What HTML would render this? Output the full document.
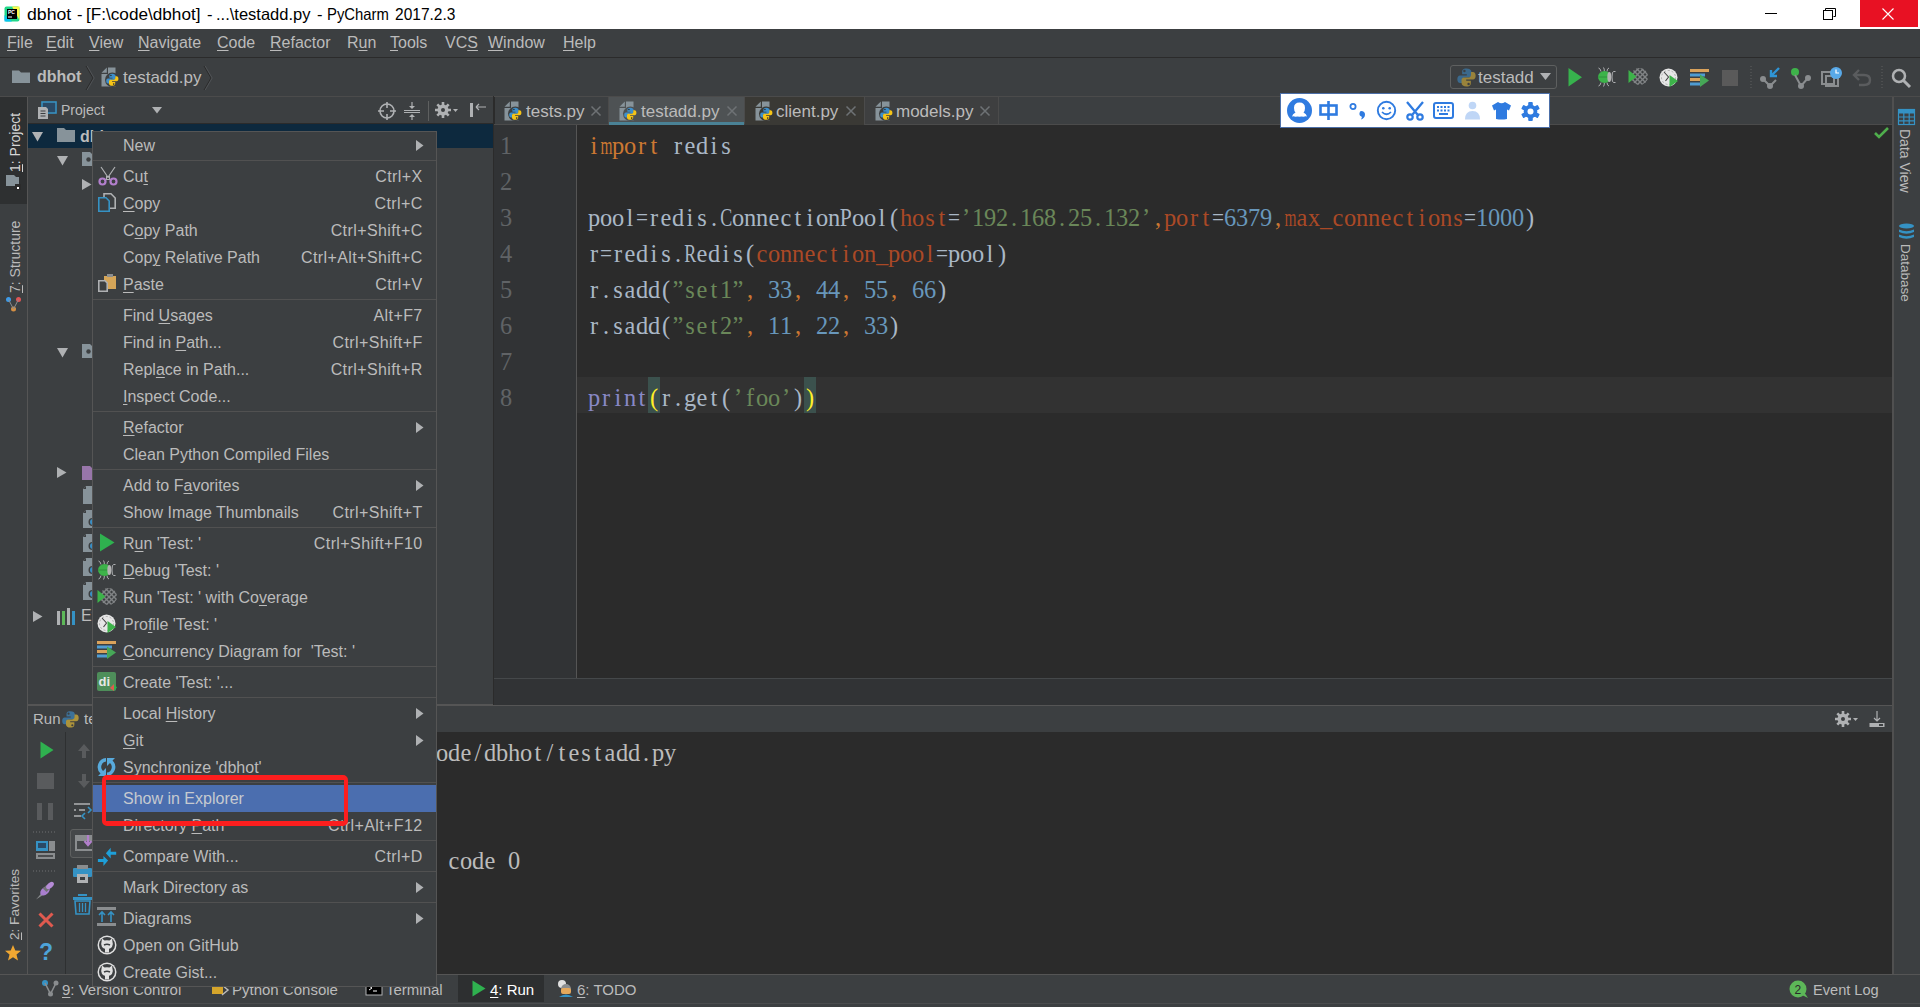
<!DOCTYPE html>
<html><head><meta charset="utf-8">
<style>
*{box-sizing:border-box;margin:0;padding:0}
html,body{width:1920px;height:1007px;overflow:hidden;background:#3C3F41;font-family:"Liberation Sans",sans-serif;color:#BBBBBB}
.a{position:absolute;overflow:visible}
.t{position:absolute;white-space:pre;line-height:1}
.u{text-decoration:underline;text-underline-offset:2px;text-decoration-thickness:1px}
.cl{position:absolute;left:588px;white-space:pre;font-family:"Liberation Serif",serif;font-size:24.4px;line-height:30px;height:30px;color:#A9B7C6}
.cl i{display:inline-block;width:12px;text-align:center;font-style:normal;white-space:pre}
.cl b{display:inline-block;font-weight:normal;transform-origin:50% 50%}
</style></head><body>

<div class="a" style="left:0px;top:0px;width:1920px;height:29px;background:#FFFFFF;"></div>
<svg class="a" style="left:4px;top:6px" width="16" height="16" viewBox="0 0 16 16"><rect x="0.5" y="0.5" width="15" height="15" rx="2" fill="#21D789"/><path d="M8 0.5 L15.5 0.5 L15.5 14 Z" fill="#FCF84A"/><path d="M0.5 9 L0.5 15.5 L8 15.5 Z" fill="#07C3F2"/><rect x="3" y="3" width="10" height="10" fill="#000"/><text x="4" y="8" font-size="5" fill="#fff" font-family="Liberation Sans" font-weight="bold">PC</text><rect x="4" y="10.5" width="4" height="1" fill="#fff"/></svg>
<div class="t" style="left:27px;top:6.03px;font-size:16.5px;color:#000000;font-weight:400;transform-origin:0 0;transform:scaleX(1.07);">dbhot</div>
<div class="t" style="left:77px;top:6.03px;font-size:16.5px;color:#000000;font-weight:400;transform-origin:0 0;transform:scaleX(1.0);">-</div>
<div class="t" style="left:86px;top:6.03px;font-size:16.5px;color:#000000;font-weight:400;transform-origin:0 0;transform:scaleX(1.04);">[F:\code\dbhot]</div>
<div class="t" style="left:207px;top:6.03px;font-size:16.5px;color:#000000;font-weight:400;transform-origin:0 0;transform:scaleX(1.0);">-</div>
<div class="t" style="left:216px;top:6.03px;font-size:16.5px;color:#000000;font-weight:400;transform-origin:0 0;transform:scaleX(1.0);">...\testadd.py</div>
<div class="t" style="left:317px;top:6.03px;font-size:16.5px;color:#000000;font-weight:400;transform-origin:0 0;transform:scaleX(1.0);">-</div>
<div class="t" style="left:326.5px;top:6.03px;font-size:16.5px;color:#000000;font-weight:400;transform-origin:0 0;transform:scaleX(0.9);">PyCharm</div>
<div class="t" style="left:394.5px;top:6.03px;font-size:16.5px;color:#000000;font-weight:400;transform-origin:0 0;transform:scaleX(0.94);">2017.2.3</div>
<div class="a" style="left:1765px;top:13px;width:12px;height:1px;background:#000;"></div>
<div class="a" style="left:1823px;top:10px;width:10px;height:10px;background:transparent;border:1px solid #000"></div>
<svg class="a" style="left:1825px;top:8px" width="11" height="11" viewBox="0 0 11 11"><path d="M0.5 2 V0.5 H10.5 V8.5 H8.5" fill="none" stroke="#000" stroke-width="1"/></svg>
<div class="a" style="left:1860px;top:0px;width:58px;height:27px;background:#E81123;"></div>
<svg class="a" style="left:1882px;top:8px" width="12" height="12" viewBox="0 0 12 12"><path d="M0.5 0.5 L11.5 11.5 M11.5 0.5 L0.5 11.5" stroke="#fff" stroke-width="1.1"/></svg>
<div class="a" style="left:0px;top:29px;width:1920px;height:28px;background:#3C3F41;"></div>
<div class="a" style="left:0px;top:57px;width:1920px;height:1px;background:#2B2B2B;"></div>
<div class="t" style="left:7px;top:35.46px;font-size:16px;color:#BBBBBB;font-weight:400;"><span class="u">F</span>ile</div>
<div class="t" style="left:46px;top:35.46px;font-size:16px;color:#BBBBBB;font-weight:400;"><span class="u">E</span>dit</div>
<div class="t" style="left:89px;top:35.46px;font-size:16px;color:#BBBBBB;font-weight:400;"><span class="u">V</span>iew</div>
<div class="t" style="left:138px;top:35.46px;font-size:16px;color:#BBBBBB;font-weight:400;"><span class="u">N</span>avigate</div>
<div class="t" style="left:217px;top:35.46px;font-size:16px;color:#BBBBBB;font-weight:400;"><span class="u">C</span>ode</div>
<div class="t" style="left:270px;top:35.46px;font-size:16px;color:#BBBBBB;font-weight:400;"><span class="u">R</span>efactor</div>
<div class="t" style="left:347px;top:35.46px;font-size:16px;color:#BBBBBB;font-weight:400;">R<span class="u">u</span>n</div>
<div class="t" style="left:390px;top:35.46px;font-size:16px;color:#BBBBBB;font-weight:400;"><span class="u">T</span>ools</div>
<div class="t" style="left:445px;top:35.46px;font-size:16px;color:#BBBBBB;font-weight:400;">VC<span class="u">S</span></div>
<div class="t" style="left:488px;top:35.46px;font-size:16px;color:#BBBBBB;font-weight:400;"><span class="u">W</span>indow</div>
<div class="t" style="left:563px;top:35.46px;font-size:16px;color:#BBBBBB;font-weight:400;"><span class="u">H</span>elp</div>
<div class="a" style="left:0px;top:58px;width:1920px;height:38px;background:#3C3F41;"></div>
<svg class="a" style="left:12px;top:69px" width="20" height="16" viewBox="0 0 20 16"><path d="M0 1.5 H7 L9 3.5 H18 V14 H0 Z" fill="#87939A"/></svg>
<div class="t" style="left:37px;top:69.46px;font-size:16px;color:#BBBBBB;font-weight:700;">dbhot</div>
<svg class="a" style="left:85px;top:66px" width="11" height="24" viewBox="0 0 11 24"><path d="M1 0 L8 12 L1 24" fill="none" stroke="#2B2B2B" stroke-width="1"/><path d="M2.2 0 L9.2 12 L2.2 24" fill="none" stroke="#505356" stroke-width="1"/></svg>
<svg class="a" style="left:101px;top:67px" width="22" height="22" viewBox="0 0 22 22"><path d="M7 0.5 H14.5 V19.5 H0.5 V7 H7 Z" fill="#87939A"/><path d="M0.5 5.8 H5.8 V0.5 Z" fill="#87939A"/><g transform="translate(4.8,6.3)"><circle cx="6.5" cy="6.5" r="7.3" fill="#3C3F41"/><path d="M6.5 0.5 C3.8 0.5 3.6 1.7 3.6 3 V4.4 H6.7 V5.1 H2.2 C0.9 5.1 0.4 6.3 0.4 7.6 C0.4 9 1 10.1 2.3 10.1 H3.5 V8.4 C3.5 7.3 4.3 6.5 5.4 6.5 H8.2 C9.1 6.5 9.8 5.8 9.8 4.9 V2.8 C9.8 1.4 8.5 0.5 6.5 0.5 Z" fill="#3D8FCB"/><path d="M6.5 0.5 C3.8 0.5 3.6 1.7 3.6 3 V4.4 H6.7 V5.1 H2.2 C0.9 5.1 0.4 6.3 0.4 7.6 C0.4 9 1 10.1 2.3 10.1 H3.5 V8.4 C3.5 7.3 4.3 6.5 5.4 6.5 H8.2 C9.1 6.5 9.8 5.8 9.8 4.9 V2.8 C9.8 1.4 8.5 0.5 6.5 0.5 Z" fill="#F5C416" transform="rotate(180 6.5 6.5)"/><circle cx="5.1" cy="2.2" r="0.8" fill="#2B2B2B"/><circle cx="7.9" cy="10.8" r="0.8" fill="#2B2B2B"/></g></svg>
<div class="t" style="left:123px;top:68.61px;font-size:17px;color:#BBBBBB;font-weight:400;">testadd.py</div>
<svg class="a" style="left:203px;top:66px" width="11" height="24" viewBox="0 0 11 24"><path d="M1 0 L8 12 L1 24" fill="none" stroke="#2B2B2B" stroke-width="1"/><path d="M2.2 0 L9.2 12 L2.2 24" fill="none" stroke="#505356" stroke-width="1"/></svg>
<div class="a" style="left:1450px;top:65px;width:107px;height:24px;background:#3C3F41;border:1px solid #5E6060;border-radius:3px"></div>
<svg class="a" style="left:1456px;top:67px" width="21" height="21" viewBox="0 0 21 21"><g opacity="0.75" transform="scale(1.5)"><g transform="translate(0.5,0.5)"><circle cx="6.5" cy="6.5" r="7.3" fill="none"/><path d="M6.5 0.5 C3.8 0.5 3.6 1.7 3.6 3 V4.4 H6.7 V5.1 H2.2 C0.9 5.1 0.4 6.3 0.4 7.6 C0.4 9 1 10.1 2.3 10.1 H3.5 V8.4 C3.5 7.3 4.3 6.5 5.4 6.5 H8.2 C9.1 6.5 9.8 5.8 9.8 4.9 V2.8 C9.8 1.4 8.5 0.5 6.5 0.5 Z" fill="#3B78A6"/><path d="M6.5 0.5 C3.8 0.5 3.6 1.7 3.6 3 V4.4 H6.7 V5.1 H2.2 C0.9 5.1 0.4 6.3 0.4 7.6 C0.4 9 1 10.1 2.3 10.1 H3.5 V8.4 C3.5 7.3 4.3 6.5 5.4 6.5 H8.2 C9.1 6.5 9.8 5.8 9.8 4.9 V2.8 C9.8 1.4 8.5 0.5 6.5 0.5 Z" fill="#B89A3A" transform="rotate(180 6.5 6.5)"/><circle cx="5.1" cy="2.2" r="0.8" fill="#3C3F41"/><circle cx="7.9" cy="10.8" r="0.8" fill="#3C3F41"/></g></g></svg>
<div class="t" style="left:1478px;top:68.61px;font-size:17px;color:#BBBBBB;font-weight:400;">testadd</div>
<svg class="a" style="left:1540px;top:73px" width="12" height="8" viewBox="0 0 12 8"><path d="M0 0 H11 L5.5 7 Z" fill="#AFB1B3"/></svg>
<svg class="a" style="left:1568px;top:68px" width="15" height="19" viewBox="0 0 15 19"><path d="M0.5 0 L14 9.2 L0.5 18.5 Z" fill="#37B24D"/></svg>
<svg class="a" style="left:1597px;top:67px" width="20" height="20" viewBox="0 0 20 20"><g stroke="#AFB1B3" stroke-width="1" fill="none"><path d="M1.5 1 Q3.5 1.5 4 4.5"/><path d="M6.5 0.5 Q7.5 2 7.3 4"/><path d="M12 1 Q10 1.5 10 4.5"/><path d="M1.5 19 Q3.5 18.5 4 15.5"/><path d="M6.5 19.5 Q7.5 18 7.3 16"/><path d="M12 19 Q10 18.5 10 15.5"/><path d="M18.5 4.5 H16.5 Q15 4.5 15 10 Q15 15.5 16.5 15.5 H18.5"/></g><ellipse cx="7.5" cy="10" rx="6.5" ry="6" fill="#3DB34A"/><path d="M1 10 H12" stroke="#2E8C3A" stroke-width="0.8"/><ellipse cx="12.3" cy="10" rx="2" ry="5" fill="#B4B4B4"/></svg>
<svg class="a" style="left:1628px;top:67px" width="21" height="20" viewBox="0 0 21 20"><defs><clipPath id="cvca"><circle cx="11.5" cy="9.5" r="8.5"/></clipPath></defs><g clip-path="url(#cvca)" stroke="#808385" stroke-width="1.4"><path d="M-18 0 L2 20" /><path d="M-13 0 L7 20" /><path d="M-8 0 L12 20" /><path d="M-3 0 L17 20" /><path d="M2 0 L22 20" /><path d="M7 0 L27 20" /><path d="M12 0 L32 20" /><path d="M17 0 L37 20" /><path d="M2 0 L-18 20" /><path d="M7 0 L-13 20" /><path d="M12 0 L-8 20" /><path d="M17 0 L-3 20" /><path d="M22 0 L2 20" /><path d="M27 0 L7 20" /><path d="M32 0 L12 20" /><path d="M37 0 L17 20" /></g><path d="M0.5 3 L8.5 9.5 L0.5 16 Z" fill="#3DB34A"/></svg>
<svg class="a" style="left:1659px;top:68px" width="20" height="20" viewBox="0 0 20 20"><circle cx="9.5" cy="9.5" r="9" fill="#E6E6E6"/><circle cx="9.5" cy="9.5" r="7" fill="none" stroke="#9A9A9A" stroke-width="0.8" stroke-dasharray="2 2"/><path d="M5 4 L9.5 9 L6.5 13" stroke="#444" stroke-width="1.1" fill="none"/><path d="M10.5 7 L19 13 L10.5 19 Z" fill="#3DB34A"/></svg>
<svg class="a" style="left:1690px;top:68px" width="20" height="20" viewBox="0 0 20 20"><rect x="0" y="1" width="19" height="3" fill="#D9A25B"/><rect x="0" y="5.5" width="15" height="3" fill="#4F9CD2"/><rect x="0" y="10" width="12" height="3" fill="#D9A25B"/><rect x="0" y="14.5" width="10" height="3" fill="#4F9CD2"/><path d="M10 6.5 L19 12.5 L10 19 Z" fill="#46A757"/></svg>
<div class="a" style="left:1722px;top:70px;width:16px;height:16px;background:#5A5A5A;"></div>
<svg class="a" style="left:1750px;top:66px" width="2" height="24" viewBox="0 0 2 24"><path d="M1 0 V24" stroke="#5E6060" stroke-dasharray="1 2"/></svg>
<svg class="a" style="left:1759px;top:67px" width="22" height="22" viewBox="0 0 22 22"><circle cx="4" cy="12" r="3" fill="#8A8D8F"/><circle cx="11" cy="19" r="3" fill="#8A8D8F"/><path d="M4 12 L11 19 L17 13" stroke="#8A8D8F" stroke-width="2" fill="none"/><path d="M20 1 L12 9 M12 3 V9 H18" stroke="#2F95D5" stroke-width="2.4" fill="none"/></svg>
<svg class="a" style="left:1790px;top:67px" width="22" height="22" viewBox="0 0 22 22"><circle cx="5" cy="5" r="4" fill="#3EB34A"/><circle cx="18" cy="11" r="3" fill="#8A8D8F"/><circle cx="11" cy="19" r="3" fill="#8A8D8F"/><path d="M5 8 L11 19 L18 11" stroke="#8A8D8F" stroke-width="2" fill="none"/></svg>
<svg class="a" style="left:1821px;top:66px" width="22" height="22" viewBox="0 0 22 22"><rect x="1" y="6" width="12" height="12" fill="none" stroke="#8A8D8F" stroke-width="2"/><rect x="5" y="10" width="12" height="10" fill="none" stroke="#8A8D8F" stroke-width="2"/><circle cx="15" cy="7" r="6" fill="#58A9E8"/><path d="M15 3.5 V7 H18" stroke="#fff" stroke-width="1.2" fill="none"/></svg>
<svg class="a" style="left:1852px;top:68px" width="20" height="20" viewBox="0 0 20 20"><path d="M7 2 L2 7 L7 12 M2 7 H12 Q18 7 18 12 Q18 17 12 17 H7" stroke="#5A5C5E" stroke-width="2.4" fill="none"/></svg>
<svg class="a" style="left:1881px;top:66px" width="2" height="24" viewBox="0 0 2 24"><path d="M1 0 V24" stroke="#5E6060" stroke-dasharray="1 2"/></svg>
<svg class="a" style="left:1891px;top:68px" width="22" height="22" viewBox="0 0 22 22"><circle cx="8" cy="8" r="6" fill="none" stroke="#AFB1B3" stroke-width="2.5"/><path d="M12.5 12.5 L19 19" stroke="#AFB1B3" stroke-width="3"/></svg>
<div class="a" style="left:0px;top:96px;width:1920px;height:1px;background:#4B4B4B;"></div>
<div class="a" style="left:0px;top:97px;width:27px;height:878px;background:#3C3F41;"></div>
<div class="a" style="left:0px;top:97px;width:27px;height:107px;background:#2E3031;"></div>
<div class="a" style="left:27px;top:97px;width:1px;height:878px;background:#555555;"></div>
<div class="t" style="left:8px;top:172px;font-size:14px;color:#D6D6D6;transform-origin:0 0;transform:rotate(-90deg);"><span class="u">1</span>: Project</div>
<svg class="a" style="left:5px;top:173px" width="18" height="18" viewBox="0 0 18 18"><path d="M1 2 H9 L11 4 H14 V13 H1 Z" fill="#87939A"/><rect x="10" y="11" width="6" height="6" fill="#2B2B2B"/><rect x="12" y="14" width="2" height="2" fill="#fff"/></svg>
<div class="t" style="left:8px;top:293px;font-size:14px;color:#BBBBBB;transform-origin:0 0;transform:rotate(-90deg);"><span class="u">7</span>: Structure</div>
<svg class="a" style="left:5px;top:296px" width="18" height="18" viewBox="0 0 18 18"><circle cx="3.5" cy="3.5" r="2.5" fill="#3D9BE9"/><circle cx="13.5" cy="3.5" r="2.5" fill="#E05555"/><circle cx="8.5" cy="13" r="2.5" fill="#D58F43"/><path d="M3.5 3.5 L8.5 13 L13.5 3.5" stroke="#8A8D8F" stroke-width="1" fill="none"/></svg>
<div class="t" style="left:8px;top:940px;font-size:13.6px;color:#BBBBBB;transform-origin:0 0;transform:rotate(-90deg);"><span class="u">2</span>: Favorites</div>
<svg class="a" style="left:4px;top:944px" width="18" height="18" viewBox="0 0 18 18"><path d="M9 1 L11.3 6.5 L17 6.8 L12.5 10.5 L14 16.5 L9 13.2 L4 16.5 L5.5 10.5 L1 6.8 L6.7 6.5 Z" fill="#F0A732"/></svg>
<div class="a" style="left:1892px;top:97px;width:2px;height:878px;background:#505050;"></div>
<div class="a" style="left:1894px;top:97px;width:26px;height:878px;background:#3C3F41;"></div>
<svg class="a" style="left:1898px;top:109px" width="17" height="16" viewBox="0 0 17 16"><rect x="0.5" y="0.5" width="16" height="15" fill="#3C3F41" stroke="#3592C4" stroke-width="1.2"/><rect x="0.5" y="0.5" width="16" height="4" fill="#3592C4"/><g stroke="#3592C4" stroke-width="1.2"><path d="M0 8 H17 M0 11.8 H17 M5.8 0 V16 M11.2 0 V16"/></g></svg>
<div class="t" style="left:1912px;top:129px;font-size:14px;color:#BBBBBB;transform-origin:0 0;transform:rotate(90deg);">Data View</div>
<svg class="a" style="left:1898px;top:223px" width="17" height="18" viewBox="0 0 17 18"><g fill="#3592C4"><ellipse cx="8.5" cy="3" rx="7.5" ry="2.6"/><path d="M1 6.5 Q8.5 10 16 6.5 V9 Q8.5 12.5 1 9 Z"/><path d="M1 11.5 Q8.5 15 16 11.5 V14 Q8.5 17.5 1 14 Z"/></g></svg>
<div class="t" style="left:1912px;top:244px;font-size:13.5px;color:#BBBBBB;transform-origin:0 0;transform:rotate(90deg);">Database</div>
<div class="a" style="left:0px;top:974px;width:1920px;height:1px;background:#555555;"></div>
<div class="a" style="left:0px;top:975px;width:1920px;height:32px;background:#3C3F41;"></div>
<div class="a" style="left:458px;top:975px;width:86px;height:27px;background:#2D2F30;"></div>
<div class="a" style="left:0px;top:1003px;width:1920px;height:1px;background:#4A4C4E;"></div>
<svg class="a" style="left:41px;top:979px" width="20" height="20" viewBox="0 0 20 20"><circle cx="4" cy="4" r="3" fill="#3592C4"/><circle cx="15" cy="4" r="2.5" fill="#8A8D8F"/><circle cx="9.5" cy="15" r="2.5" fill="#8A8D8F"/><path d="M4 4 L9.5 15 L15 4" stroke="#8A8D8F" stroke-width="1.6" fill="none"/></svg>
<div class="t" style="left:62px;top:982.30px;font-size:15px;color:#BBBBBB;font-weight:400;"><span class="u">9</span>: Version Control</div>
<svg class="a" style="left:211px;top:980px" width="20" height="18" viewBox="0 0 20 18"><path d="M1 6 H12 V14 H1 Z" fill="#D5A52B"/><path d="M3 3 H10 V6 H3 Z" fill="#3592C4"/><path d="M11 5 L17 10 L11 15" stroke="#BBBBBB" stroke-width="1.5" fill="none"/></svg>
<div class="t" style="left:232px;top:982.30px;font-size:15px;color:#BBBBBB;font-weight:400;">Python Console</div>
<svg class="a" style="left:366px;top:983px" width="16" height="12" viewBox="0 0 16 12"><rect x="0" y="0" width="16" height="12" fill="#000" stroke="#AFB1B3" stroke-width="1"/><path d="M3 3 L6 5 L3 7" stroke="#fff" stroke-width="1" fill="none"/><path d="M7 8 H11" stroke="#fff"/></svg>
<div class="t" style="left:386px;top:982.30px;font-size:15px;color:#BBBBBB;font-weight:400;">Terminal</div>
<svg class="a" style="left:472px;top:980px" width="14" height="17" viewBox="0 0 14 17"><path d="M0.5 0.5 L13.5 8.5 L0.5 16.5 Z" fill="#2FB14F"/></svg>
<div class="t" style="left:490px;top:982.30px;font-size:15px;color:#FFFFFF;font-weight:400;"><span class="u">4</span>: Run</div>
<svg class="a" style="left:556px;top:980px" width="18" height="18" viewBox="0 0 18 18"><circle cx="6" cy="4" r="4" fill="#E0E0E0"/><circle cx="10" cy="9" r="5" fill="#8A8D8F"/><rect x="5" y="8" width="10" height="6" rx="2" fill="#E5A85B"/><path d="M3 17 Q10 12 17 17 Z" fill="#3592C4"/></svg>
<div class="t" style="left:577px;top:982.30px;font-size:15px;color:#BBBBBB;font-weight:400;"><span class="u">6</span>: TODO</div>
<svg class="a" style="left:1789px;top:980px" width="20" height="19" viewBox="0 0 20 19"><circle cx="9" cy="9" r="8.5" fill="#5DB758"/><path d="M13 15 L19 18 L15 12 Z" fill="#5DB758"/><text x="5.5" y="14" font-size="12" font-family="Liberation Sans" fill="#2B2B2B">2</text></svg>
<div class="t" style="left:1813px;top:982.64px;font-size:14.6px;color:#BBBBBB;font-weight:400;">Event Log</div>
<div class="a" style="left:494px;top:97px;width:1398px;height:28px;background:#3C3F41;"></div>
<div class="a" style="left:494px;top:97px;width:1px;height:28px;background:#2B2B2B;"></div>
<div class="a" style="left:609px;top:97px;width:135px;height:25px;background:#4E5254;"></div>
<div class="a" style="left:609px;top:122px;width:135px;height:3px;background:#4A8296;"></div>
<div class="a" style="left:745px;top:97px;width:119px;height:28px;background:#3A3935;"></div>
<div class="a" style="left:865px;top:97px;width:133px;height:27px;background:#3E3F40;"></div>
<div class="a" style="left:608px;top:97px;width:1px;height:27px;background:#4B4B4B;"></div>
<div class="a" style="left:744px;top:97px;width:1px;height:27px;background:#4B4B4B;"></div>
<div class="a" style="left:864px;top:97px;width:1px;height:27px;background:#4B4B4B;"></div>
<div class="a" style="left:998px;top:97px;width:1px;height:27px;background:#4B4B4B;"></div>
<div class="a" style="left:494px;top:124px;width:115px;height:1px;background:#4B4B4B;"></div>
<div class="a" style="left:864px;top:124px;width:1028px;height:1px;background:#4B4B4B;"></div>
<svg class="a" style="left:504px;top:101px" width="22" height="22" viewBox="0 0 22 22"><path d="M7 0.5 H14.5 V19.5 H0.5 V7 H7 Z" fill="#87939A"/><path d="M0.5 5.8 H5.8 V0.5 Z" fill="#87939A"/><g transform="translate(4.8,6.3)"><circle cx="6.5" cy="6.5" r="7.3" fill="#3C3F41"/><path d="M6.5 0.5 C3.8 0.5 3.6 1.7 3.6 3 V4.4 H6.7 V5.1 H2.2 C0.9 5.1 0.4 6.3 0.4 7.6 C0.4 9 1 10.1 2.3 10.1 H3.5 V8.4 C3.5 7.3 4.3 6.5 5.4 6.5 H8.2 C9.1 6.5 9.8 5.8 9.8 4.9 V2.8 C9.8 1.4 8.5 0.5 6.5 0.5 Z" fill="#3D8FCB"/><path d="M6.5 0.5 C3.8 0.5 3.6 1.7 3.6 3 V4.4 H6.7 V5.1 H2.2 C0.9 5.1 0.4 6.3 0.4 7.6 C0.4 9 1 10.1 2.3 10.1 H3.5 V8.4 C3.5 7.3 4.3 6.5 5.4 6.5 H8.2 C9.1 6.5 9.8 5.8 9.8 4.9 V2.8 C9.8 1.4 8.5 0.5 6.5 0.5 Z" fill="#F5C416" transform="rotate(180 6.5 6.5)"/><circle cx="5.1" cy="2.2" r="0.8" fill="#2B2B2B"/><circle cx="7.9" cy="10.8" r="0.8" fill="#2B2B2B"/></g></svg>
<div class="t" style="left:526px;top:102.61px;font-size:17px;color:#BBBBBB;font-weight:400;">tests.py</div>
<svg class="a" style="left:591px;top:106px" width="10" height="10" viewBox="0 0 10 10"><path d="M0.5 0.5 L9.5 9.5 M9.5 0.5 L0.5 9.5" stroke="#6E7275" stroke-width="1.5"/></svg>
<svg class="a" style="left:619px;top:101px" width="22" height="22" viewBox="0 0 22 22"><path d="M7 0.5 H14.5 V19.5 H0.5 V7 H7 Z" fill="#87939A"/><path d="M0.5 5.8 H5.8 V0.5 Z" fill="#87939A"/><g transform="translate(4.8,6.3)"><circle cx="6.5" cy="6.5" r="7.3" fill="#4E5254"/><path d="M6.5 0.5 C3.8 0.5 3.6 1.7 3.6 3 V4.4 H6.7 V5.1 H2.2 C0.9 5.1 0.4 6.3 0.4 7.6 C0.4 9 1 10.1 2.3 10.1 H3.5 V8.4 C3.5 7.3 4.3 6.5 5.4 6.5 H8.2 C9.1 6.5 9.8 5.8 9.8 4.9 V2.8 C9.8 1.4 8.5 0.5 6.5 0.5 Z" fill="#3D8FCB"/><path d="M6.5 0.5 C3.8 0.5 3.6 1.7 3.6 3 V4.4 H6.7 V5.1 H2.2 C0.9 5.1 0.4 6.3 0.4 7.6 C0.4 9 1 10.1 2.3 10.1 H3.5 V8.4 C3.5 7.3 4.3 6.5 5.4 6.5 H8.2 C9.1 6.5 9.8 5.8 9.8 4.9 V2.8 C9.8 1.4 8.5 0.5 6.5 0.5 Z" fill="#F5C416" transform="rotate(180 6.5 6.5)"/><circle cx="5.1" cy="2.2" r="0.8" fill="#2B2B2B"/><circle cx="7.9" cy="10.8" r="0.8" fill="#2B2B2B"/></g></svg>
<div class="t" style="left:641px;top:102.61px;font-size:17px;color:#BBBBBB;font-weight:400;">testadd.py</div>
<svg class="a" style="left:727px;top:106px" width="10" height="10" viewBox="0 0 10 10"><path d="M0.5 0.5 L9.5 9.5 M9.5 0.5 L0.5 9.5" stroke="#6E7275" stroke-width="1.5"/></svg>
<svg class="a" style="left:755px;top:101px" width="22" height="22" viewBox="0 0 22 22"><path d="M7 0.5 H14.5 V19.5 H0.5 V7 H7 Z" fill="#87939A"/><path d="M0.5 5.8 H5.8 V0.5 Z" fill="#87939A"/><g transform="translate(4.8,6.3)"><circle cx="6.5" cy="6.5" r="7.3" fill="#3A3935"/><path d="M6.5 0.5 C3.8 0.5 3.6 1.7 3.6 3 V4.4 H6.7 V5.1 H2.2 C0.9 5.1 0.4 6.3 0.4 7.6 C0.4 9 1 10.1 2.3 10.1 H3.5 V8.4 C3.5 7.3 4.3 6.5 5.4 6.5 H8.2 C9.1 6.5 9.8 5.8 9.8 4.9 V2.8 C9.8 1.4 8.5 0.5 6.5 0.5 Z" fill="#3D8FCB"/><path d="M6.5 0.5 C3.8 0.5 3.6 1.7 3.6 3 V4.4 H6.7 V5.1 H2.2 C0.9 5.1 0.4 6.3 0.4 7.6 C0.4 9 1 10.1 2.3 10.1 H3.5 V8.4 C3.5 7.3 4.3 6.5 5.4 6.5 H8.2 C9.1 6.5 9.8 5.8 9.8 4.9 V2.8 C9.8 1.4 8.5 0.5 6.5 0.5 Z" fill="#F5C416" transform="rotate(180 6.5 6.5)"/><circle cx="5.1" cy="2.2" r="0.8" fill="#2B2B2B"/><circle cx="7.9" cy="10.8" r="0.8" fill="#2B2B2B"/></g></svg>
<div class="t" style="left:776px;top:102.61px;font-size:17px;color:#BBBBBB;font-weight:400;">client.py</div>
<svg class="a" style="left:846px;top:106px" width="10" height="10" viewBox="0 0 10 10"><path d="M0.5 0.5 L9.5 9.5 M9.5 0.5 L0.5 9.5" stroke="#6E7275" stroke-width="1.5"/></svg>
<svg class="a" style="left:875px;top:101px" width="22" height="22" viewBox="0 0 22 22"><path d="M7 0.5 H14.5 V19.5 H0.5 V7 H7 Z" fill="#87939A"/><path d="M0.5 5.8 H5.8 V0.5 Z" fill="#87939A"/><g transform="translate(4.8,6.3)"><circle cx="6.5" cy="6.5" r="7.3" fill="#3C3F41"/><path d="M6.5 0.5 C3.8 0.5 3.6 1.7 3.6 3 V4.4 H6.7 V5.1 H2.2 C0.9 5.1 0.4 6.3 0.4 7.6 C0.4 9 1 10.1 2.3 10.1 H3.5 V8.4 C3.5 7.3 4.3 6.5 5.4 6.5 H8.2 C9.1 6.5 9.8 5.8 9.8 4.9 V2.8 C9.8 1.4 8.5 0.5 6.5 0.5 Z" fill="#3D8FCB"/><path d="M6.5 0.5 C3.8 0.5 3.6 1.7 3.6 3 V4.4 H6.7 V5.1 H2.2 C0.9 5.1 0.4 6.3 0.4 7.6 C0.4 9 1 10.1 2.3 10.1 H3.5 V8.4 C3.5 7.3 4.3 6.5 5.4 6.5 H8.2 C9.1 6.5 9.8 5.8 9.8 4.9 V2.8 C9.8 1.4 8.5 0.5 6.5 0.5 Z" fill="#F5C416" transform="rotate(180 6.5 6.5)"/><circle cx="5.1" cy="2.2" r="0.8" fill="#2B2B2B"/><circle cx="7.9" cy="10.8" r="0.8" fill="#2B2B2B"/></g></svg>
<div class="t" style="left:896px;top:102.61px;font-size:17px;color:#BBBBBB;font-weight:400;">models.py</div>
<svg class="a" style="left:980px;top:106px" width="10" height="10" viewBox="0 0 10 10"><path d="M0.5 0.5 L9.5 9.5 M9.5 0.5 L0.5 9.5" stroke="#6E7275" stroke-width="1.5"/></svg>
<div class="a" style="left:494px;top:125px;width:82px;height:553px;background:#313335;"></div>
<div class="a" style="left:576px;top:125px;width:1px;height:553px;background:#555555;"></div>
<div class="a" style="left:577px;top:125px;width:1315px;height:553px;background:#2B2B2B;"></div>
<div class="a" style="left:577px;top:377px;width:1315px;height:36px;background:#323232;"></div>
<div class="a" style="left:494px;top:678px;width:1398px;height:1px;background:#45484A;"></div>
<div class="a" style="left:494px;top:679px;width:1398px;height:26px;background:#313335;"></div>
<svg class="a" style="left:1874px;top:127px" width="15" height="12" viewBox="0 0 15 12"><path d="M1 6 L5 10 L14 1" stroke="#4FAE4C" stroke-width="2.6" fill="none"/></svg>
<div class="cl" style="left:500px;top:131px;color:#606366"><i>1</i></div>
<div class="cl" style="left:500px;top:167px;color:#606366"><i>2</i></div>
<div class="cl" style="left:500px;top:203px;color:#606366"><i>3</i></div>
<div class="cl" style="left:500px;top:239px;color:#606366"><i>4</i></div>
<div class="cl" style="left:500px;top:275px;color:#606366"><i>5</i></div>
<div class="cl" style="left:500px;top:311px;color:#606366"><i>6</i></div>
<div class="cl" style="left:500px;top:347px;color:#606366"><i>7</i></div>
<div class="cl" style="left:500px;top:383px;color:#606366"><i>8</i></div>
<div class="a" style="left:648px;top:377px;width:12px;height:36px;background:#3B514D;"></div>
<div class="a" style="left:804px;top:377px;width:12px;height:36px;background:#3B514D;"></div>
<div class="cl" style="top:131px"><span style="color:#CC7832"><i>i</i><i><b style="margin:0 -3.49px 0 -3.49px;transform:scaleX(0.632)">m</b></i><i>p</i><i>o</i><i>r</i><i>t</i></span><span style="color:#A9B7C6"><i> </i><i>r</i><i>e</i><i>d</i><i>i</i><i>s</i></span></div>
<div class="cl" style="top:203px"><span style="color:#A9B7C6"><i>p</i><i>o</i><i>o</i><i>l</i><i><b style="margin:0 -0.88px 0 -0.88px;transform:scaleX(0.872)">=</b></i><i>r</i><i>e</i><i>d</i><i>i</i><i>s</i><i>.</i><i><b style="margin:0 -2.14px 0 -2.14px;transform:scaleX(0.737)">C</b></i><i>o</i><i>n</i><i>n</i><i>e</i><i>c</i><i>t</i><i>i</i><i>o</i><i>n</i><i><b style="margin:0 -0.79px 0 -0.79px;transform:scaleX(0.884)">P</b></i><i>o</i><i>o</i><i>l</i><i>(</i></span><span style="color:#AA4926"><i>h</i><i>o</i><i>s</i><i>t</i></span><span style="color:#A9B7C6"><i><b style="margin:0 -0.88px 0 -0.88px;transform:scaleX(0.872)">=</b></i></span><span style="color:#6A8759"><i>’</i><i>1</i><i>9</i><i>2</i><i>.</i><i>1</i><i>6</i><i>8</i><i>.</i><i>2</i><i>5</i><i>.</i><i>1</i><i>3</i><i>2</i><i>’</i></span><span style="color:#CC7832"><i>,</i></span><span style="color:#AA4926"><i>p</i><i>o</i><i>r</i><i>t</i></span><span style="color:#A9B7C6"><i><b style="margin:0 -0.88px 0 -0.88px;transform:scaleX(0.872)">=</b></i></span><span style="color:#6897BB"><i>6</i><i>3</i><i>7</i><i>9</i></span><span style="color:#CC7832"><i>,</i></span><span style="color:#AA4926"><i><b style="margin:0 -3.49px 0 -3.49px;transform:scaleX(0.632)">m</b></i><i>a</i><i>x</i><i>_</i><i>c</i><i>o</i><i>n</i><i>n</i><i>e</i><i>c</i><i>t</i><i>i</i><i>o</i><i>n</i><i>s</i></span><span style="color:#A9B7C6"><i><b style="margin:0 -0.88px 0 -0.88px;transform:scaleX(0.872)">=</b></i></span><span style="color:#6897BB"><i>1</i><i>0</i><i>0</i><i>0</i></span><span style="color:#A9B7C6"><i>)</i></span></div>
<div class="cl" style="top:239px"><span style="color:#A9B7C6"><i>r</i><i><b style="margin:0 -0.88px 0 -0.88px;transform:scaleX(0.872)">=</b></i><i>r</i><i>e</i><i>d</i><i>i</i><i>s</i><i>.</i><i><b style="margin:0 -2.14px 0 -2.14px;transform:scaleX(0.737)">R</b></i><i>e</i><i>d</i><i>i</i><i>s</i><i>(</i></span><span style="color:#AA4926"><i>c</i><i>o</i><i>n</i><i>n</i><i>e</i><i>c</i><i>t</i><i>i</i><i>o</i><i>n</i><i>_</i><i>p</i><i>o</i><i>o</i><i>l</i></span><span style="color:#A9B7C6"><i><b style="margin:0 -0.88px 0 -0.88px;transform:scaleX(0.872)">=</b></i><i>p</i><i>o</i><i>o</i><i>l</i><i>)</i></span></div>
<div class="cl" style="top:275px"><span style="color:#A9B7C6"><i>r</i><i>.</i><i>s</i><i>a</i><i>d</i><i>d</i><i>(</i></span><span style="color:#6A8759"><i>”</i><i>s</i><i>e</i><i>t</i><i>1</i><i>”</i></span><span style="color:#CC7832"><i>,</i><i> </i></span><span style="color:#6897BB"><i>3</i><i>3</i></span><span style="color:#CC7832"><i>,</i><i> </i></span><span style="color:#6897BB"><i>4</i><i>4</i></span><span style="color:#CC7832"><i>,</i><i> </i></span><span style="color:#6897BB"><i>5</i><i>5</i></span><span style="color:#CC7832"><i>,</i><i> </i></span><span style="color:#6897BB"><i>6</i><i>6</i></span><span style="color:#A9B7C6"><i>)</i></span></div>
<div class="cl" style="top:311px"><span style="color:#A9B7C6"><i>r</i><i>.</i><i>s</i><i>a</i><i>d</i><i>d</i><i>(</i></span><span style="color:#6A8759"><i>”</i><i>s</i><i>e</i><i>t</i><i>2</i><i>”</i></span><span style="color:#CC7832"><i>,</i><i> </i></span><span style="color:#6897BB"><i>1</i><i>1</i></span><span style="color:#CC7832"><i>,</i><i> </i></span><span style="color:#6897BB"><i>2</i><i>2</i></span><span style="color:#CC7832"><i>,</i><i> </i></span><span style="color:#6897BB"><i>3</i><i>3</i></span><span style="color:#A9B7C6"><i>)</i></span></div>
<div class="cl" style="top:383px"><span style="color:#8888C6"><i>p</i><i>r</i><i>i</i><i>n</i><i>t</i></span><span style="color:#FFEF28"><i>(</i></span><span style="color:#A9B7C6"><i>r</i><i>.</i><i>g</i><i>e</i><i>t</i><i>(</i></span><span style="color:#6A8759"><i>’</i><i>f</i><i>o</i><i>o</i><i>’</i></span><span style="color:#A9B7C6"><i>)</i></span><span style="color:#FFEF28"><i>)</i></span></div>
<div class="a" style="left:28px;top:704px;width:465px;height:1px;background:#555555;"></div>
<div class="a" style="left:28px;top:705px;width:1864px;height:1px;background:#555555;"></div>
<div class="a" style="left:28px;top:706px;width:1864px;height:26px;background:#3C3F41;"></div>
<div class="t" style="left:33px;top:711.30px;font-size:15px;color:#BBBBBB;font-weight:400;">Run</div>
<svg class="a" style="left:61px;top:710px" width="20" height="20" viewBox="0 0 20 20"><g opacity="0.8" transform="scale(1.35)"><g transform="translate(0.5,0.5)"><circle cx="6.5" cy="6.5" r="7.3" fill="none"/><path d="M6.5 0.5 C3.8 0.5 3.6 1.7 3.6 3 V4.4 H6.7 V5.1 H2.2 C0.9 5.1 0.4 6.3 0.4 7.6 C0.4 9 1 10.1 2.3 10.1 H3.5 V8.4 C3.5 7.3 4.3 6.5 5.4 6.5 H8.2 C9.1 6.5 9.8 5.8 9.8 4.9 V2.8 C9.8 1.4 8.5 0.5 6.5 0.5 Z" fill="#3D7FB0"/><path d="M6.5 0.5 C3.8 0.5 3.6 1.7 3.6 3 V4.4 H6.7 V5.1 H2.2 C0.9 5.1 0.4 6.3 0.4 7.6 C0.4 9 1 10.1 2.3 10.1 H3.5 V8.4 C3.5 7.3 4.3 6.5 5.4 6.5 H8.2 C9.1 6.5 9.8 5.8 9.8 4.9 V2.8 C9.8 1.4 8.5 0.5 6.5 0.5 Z" fill="#C9A83A" transform="rotate(180 6.5 6.5)"/><circle cx="5.1" cy="2.2" r="0.8" fill="#3C3F41"/><circle cx="7.9" cy="10.8" r="0.8" fill="#3C3F41"/></g></g></svg>
<div class="t" style="left:84px;top:711.30px;font-size:15px;color:#BBBBBB;font-weight:400;">testadd</div>
<svg class="a" style="left:1835px;top:710px" width="24" height="18" viewBox="0 0 24 18"><g transform="translate(8,9)"><circle r="5.5" fill="#AFB1B3"/><g stroke="#AFB1B3" stroke-width="2.6"><path d="M0 -8 V8 M-8 0 H8 M-5.7 -5.7 L5.7 5.7 M5.7 -5.7 L-5.7 5.7"/></g><circle r="2" fill="#3C3F41"/></g><path d="M18 8 H23 L20.5 11 Z" fill="#AFB1B3"/></svg>
<svg class="a" style="left:1869px;top:711px" width="16" height="17" viewBox="0 0 16 17"><path d="M8 0 V10 M5 7 L8 10 L11 7" stroke="#AFB1B3" stroke-width="1.2" fill="none"/><rect x="0.5" y="12" width="15" height="4" fill="#AFB1B3"/><rect x="10" y="13" width="4" height="2" fill="#3C3F41"/></svg>
<div class="a" style="left:28px;top:732px;width:1864px;height:242px;background:#3C3F41;"></div>
<div class="a" style="left:65px;top:732px;width:1px;height:242px;background:#2E3031;"></div>
<div class="a" style="left:96px;top:732px;width:1px;height:242px;background:#2E3031;"></div>
<div class="a" style="left:97px;top:732px;width:1795px;height:242px;background:#2B2B2B;"></div>
<div class="cl" style="left:436px;top:738px;color:#BBBBBB"><i>o</i><i>d</i><i>e</i><i>/</i><i>d</i><i>b</i><i>h</i><i>o</i><i>t</i><i>/</i><i>t</i><i>e</i><i>s</i><i>t</i><i>a</i><i>d</i><i>d</i><i>.</i><i>p</i><i>y</i></div>
<div class="cl" style="left:436px;top:846px;color:#BBBBBB"><i> </i><i>c</i><i>o</i><i>d</i><i>e</i><i> </i><i>0</i></div>
<svg class="a" style="left:40px;top:741px" width="14" height="18" viewBox="0 0 14 18"><path d="M0.5 0.5 L13.5 9 L0.5 17.5 Z" fill="#2FB14F"/></svg>
<div class="a" style="left:37px;top:773px;width:17px;height:16px;background:#595B5D;"></div>
<div class="a" style="left:37px;top:803px;width:5px;height:17px;background:#595B5D;"></div>
<div class="a" style="left:48px;top:803px;width:5px;height:17px;background:#595B5D;"></div>
<svg class="a" style="left:33px;top:831px" width="24" height="2" viewBox="0 0 24 2"><path d="M0 1 H24" stroke="#6E7072" stroke-dasharray="1 2"/></svg>
<svg class="a" style="left:36px;top:841px" width="20" height="19" viewBox="0 0 20 19"><rect x="0" y="0" width="12" height="10" fill="#3592C4"/><rect x="2" y="2" width="8" height="5" fill="#2B4A66"/><rect x="13" y="0" width="6" height="10" fill="#8A8D8F"/><rect x="0" y="12" width="19" height="6" fill="#8A8D8F"/><rect x="2" y="14" width="15" height="2" fill="#4B4D4F"/></svg>
<svg class="a" style="left:33px;top:870px" width="24" height="2" viewBox="0 0 24 2"><path d="M0 1 H24" stroke="#6E7072" stroke-dasharray="1 2"/></svg>
<svg class="a" style="left:35px;top:880px" width="21" height="20" viewBox="0 0 21 20"><path d="M1 19.5 L7.5 12 L9.5 14 Z" fill="#8A8D8F"/><ellipse cx="10" cy="11" rx="5.5" ry="3.5" transform="rotate(-40 10 11)" fill="#A97FCF"/><rect x="9" y="6" width="5" height="5" transform="rotate(45 11.5 8.5)" fill="#707274"/><ellipse cx="15" cy="5.5" rx="4.5" ry="2.6" transform="rotate(-40 15 5.5)" fill="#B58BD6"/></svg>
<svg class="a" style="left:38px;top:912px" width="16" height="16" viewBox="0 0 16 16"><path d="M1.5 1.5 L14.5 14.5 M14.5 1.5 L1.5 14.5" stroke="#E05A4F" stroke-width="3"/></svg>
<div class="t" style="left:39px;top:940.53px;font-size:23px;color:#4DA3D9;font-weight:700;">?</div>
<svg class="a" style="left:76px;top:743px" width="16" height="16" viewBox="0 0 16 16"><path d="M8 1 L14 8 H10 V15 H6 V8 H2 Z" fill="#595B5D"/></svg>
<svg class="a" style="left:76px;top:773px" width="16" height="16" viewBox="0 0 16 16"><path d="M8 15 L14 8 H10 V1 H6 V8 H2 Z" fill="#595B5D"/></svg>
<svg class="a" style="left:73px;top:802px" width="20" height="19" viewBox="0 0 20 19"><path d="M1 2 H17 M6 8 H12 M1 14 H8 M1 8 H3" stroke="#AFB1B3" stroke-width="1.6"/><path d="M15 5 L18 8 L15 11 M12 11 L9 14 L12 17" stroke="#3592C4" stroke-width="1.6" fill="none"/></svg>
<div class="a" style="left:70px;top:829px;width:30px;height:29px;background:#45484A;border:1px solid #5E6060;border-radius:3px"></div>
<svg class="a" style="left:75px;top:834px" width="20" height="19" viewBox="0 0 20 19"><rect x="1" y="2" width="17" height="14" fill="none" stroke="#8A8D8F" stroke-width="2"/><rect x="2" y="3" width="15" height="4" fill="#8A8D8F"/><path d="M13 1 V10 M9.5 7 L13 11 L16.5 7" stroke="#B27FCC" stroke-width="2.2" fill="none"/></svg>
<svg class="a" style="left:73px;top:865px" width="20" height="19" viewBox="0 0 20 19"><rect x="0" y="3" width="19" height="9" rx="1" fill="#3592C4"/><rect x="4" y="0" width="11" height="4" fill="#8A8D8F"/><rect x="4" y="9" width="11" height="9" fill="#AFB1B3"/><rect x="7" y="12" width="5" height="3" fill="#3C3F41"/></svg>
<svg class="a" style="left:73px;top:894px" width="20" height="21" viewBox="0 0 20 21"><rect x="5" y="0" width="9" height="2" fill="#3592C4"/><rect x="0" y="3" width="19" height="3" fill="#3592C4"/><path d="M2 7 H17 L16 20 H3 Z" fill="none" stroke="#3592C4" stroke-width="1.6"/><path d="M6.5 9 V18 M9.5 9 V18 M12.5 9 V18" stroke="#3592C4" stroke-width="1.3"/></svg>
<div class="a" style="left:28px;top:97px;width:465px;height:26px;background:#3C3F41;"></div>
<div class="a" style="left:28px;top:123px;width:465px;height:1px;background:#2B2B2B;"></div>
<div class="a" style="left:28px;top:124px;width:465px;height:580px;background:#3C3F41;"></div>
<div class="a" style="left:28px;top:124px;width:465px;height:24px;background:#0D293E;"></div>
<div class="a" style="left:493px;top:96px;width:1px;height:609px;background:#2B2B2B;"></div>
<svg class="a" style="left:37px;top:101px" width="20" height="20" viewBox="0 0 20 20"><rect x="5" y="1" width="14" height="11" fill="none" stroke="#3592C4" stroke-width="1.6"/><rect x="6" y="2" width="12" height="9" fill="#2B4A66"/><path d="M1 6 H9 L11 8 V18 H1 Z" fill="#AFB1B3"/><path d="M3.5 10 H8.5 M3.5 12.5 H8.5 M3.5 15 H8.5" stroke="#3C3F41" stroke-width="1"/></svg>
<div class="t" style="left:61px;top:103.15px;font-size:14px;color:#BBBBBB;font-weight:400;">Project</div>
<svg class="a" style="left:152px;top:107px" width="10" height="7" viewBox="0 0 10 7"><path d="M0 0 H10 L5 6.5 Z" fill="#AFB1B3"/></svg>
<svg class="a" style="left:378px;top:102px" width="18" height="18" viewBox="0 0 18 18"><circle cx="9" cy="9" r="7" fill="none" stroke="#AFB1B3" stroke-width="1.6"/><path d="M9 0 V6 M9 12 V18 M0 9 H6 M12 9 H18" stroke="#AFB1B3" stroke-width="1.6"/></svg>
<svg class="a" style="left:403px;top:102px" width="18" height="18" viewBox="0 0 18 18"><path d="M1 8.5 H17 M1 10.5 H17" stroke="#AFB1B3" stroke-width="1"/><path d="M9 0 V6" stroke="#AFB1B3" stroke-width="1.2"/><path d="M6 4 L9 7 L12 4 Z" fill="#AFB1B3"/><path d="M9 18 V13" stroke="#AFB1B3" stroke-width="1.2"/><path d="M6 15 L9 12 L12 15 Z" fill="#AFB1B3"/></svg>
<div class="a" style="left:428px;top:101px;width:1px;height:20px;background:#5E6060;"></div>
<svg class="a" style="left:435px;top:101px" width="24" height="18" viewBox="0 0 24 18"><g transform="translate(8,9)"><circle r="5.5" fill="#AFB1B3"/><g stroke="#AFB1B3" stroke-width="2.6"><path d="M0 -8 V8 M-8 0 H8 M-5.7 -5.7 L5.7 5.7 M5.7 -5.7 L-5.7 5.7"/></g><circle r="2" fill="#3C3F41"/></g><path d="M18 8 H23 L20.5 11 Z" fill="#AFB1B3"/></svg>
<svg class="a" style="left:469px;top:101px" width="18" height="18" viewBox="0 0 18 18"><rect x="1" y="2" width="3" height="14" fill="#AFB1B3"/><path d="M7 6 H17 M7 6 L10 3 M7 6 L10 9" stroke="#AFB1B3" stroke-width="1.2" fill="none"/></svg>
<svg class="a" style="left:32px;top:132px" width="11" height="10" viewBox="0 0 11 10"><path d="M0 0 H11 L5.5 9.5 Z" fill="#AFB1B3"/></svg>
<svg class="a" style="left:57px;top:128px" width="18" height="14" viewBox="0 0 18 14"><path d="M0 0 H7 L9 2 H18 V14 H0 Z" fill="#87939A"/></svg>
<div class="t" style="left:80px;top:129.46px;font-size:16px;color:#BBBBBB;font-weight:700;">dbhot</div>
<div class="t" style="left:150px;top:130.46px;font-size:16px;color:#999999;font-weight:400;">F:\code\dbhot</div>
<svg class="a" style="left:57px;top:156px" width="11" height="10" viewBox="0 0 11 10"><path d="M0 0 H11 L5.5 9.5 Z" fill="#AFB1B3"/></svg>
<svg class="a" style="left:82px;top:152px" width="14" height="14" viewBox="0 0 14 14"><path d="M0 0 H8 L12 4 V14 H0 Z" fill="#87939A"/><circle cx="6.5" cy="7.5" r="2.2" fill="#3C3F41"/></svg>
<svg class="a" style="left:82px;top:179px" width="10" height="11" viewBox="0 0 10 11"><path d="M0 0 L9.5 5.5 L0 11 Z" fill="#AFB1B3"/></svg>
<svg class="a" style="left:57px;top:348px" width="11" height="10" viewBox="0 0 11 10"><path d="M0 0 H11 L5.5 9.5 Z" fill="#AFB1B3"/></svg>
<svg class="a" style="left:82px;top:344px" width="14" height="14" viewBox="0 0 14 14"><path d="M0 0 H8 L12 4 V14 H0 Z" fill="#87939A"/><circle cx="6.5" cy="7.5" r="2.2" fill="#3C3F41"/></svg>
<svg class="a" style="left:57px;top:467px" width="10" height="11" viewBox="0 0 10 11"><path d="M0 0 L9.5 5.5 L0 11 Z" fill="#AFB1B3"/></svg>
<svg class="a" style="left:82px;top:466px" width="14" height="14" viewBox="0 0 14 14"><path d="M0 0 H8 L10 2 V14 H0 Z" fill="#9876AA"/></svg>
<svg class="a" style="left:83px;top:486px" width="14" height="18" viewBox="0 0 14 18"><path d="M0 3 L3 0 H12 V18 H0 Z" fill="#87939A"/><path d="M0 3 H3 V0 Z" fill="#3C3F41"/></svg>
<svg class="a" style="left:83px;top:510px" width="14" height="18" viewBox="0 0 14 18"><path d="M0 3 L3 0 H12 V18 H0 Z" fill="#87939A"/><path d="M0 3 H3 V0 Z" fill="#3C3F41"/><circle cx="9.5" cy="12" r="4" fill="#3C3F41"/><circle cx="10" cy="12" r="3" fill="#3A8FC5"/></svg>
<svg class="a" style="left:83px;top:534px" width="14" height="18" viewBox="0 0 14 18"><path d="M0 3 L3 0 H12 V18 H0 Z" fill="#87939A"/><path d="M0 3 H3 V0 Z" fill="#3C3F41"/><circle cx="9.5" cy="12" r="4" fill="#3C3F41"/><circle cx="10" cy="12" r="3" fill="#3A8FC5"/></svg>
<svg class="a" style="left:83px;top:558px" width="14" height="18" viewBox="0 0 14 18"><path d="M0 3 L3 0 H12 V18 H0 Z" fill="#87939A"/><path d="M0 3 H3 V0 Z" fill="#3C3F41"/><circle cx="9.5" cy="12" r="4" fill="#3C3F41"/><circle cx="10" cy="12" r="3" fill="#3A8FC5"/></svg>
<svg class="a" style="left:83px;top:582px" width="14" height="18" viewBox="0 0 14 18"><path d="M0 3 L3 0 H12 V18 H0 Z" fill="#87939A"/><path d="M0 3 H3 V0 Z" fill="#3C3F41"/><circle cx="9.5" cy="12" r="4" fill="#3C3F41"/><circle cx="10" cy="12" r="3" fill="#3A8FC5"/></svg>
<svg class="a" style="left:33px;top:611px" width="10" height="11" viewBox="0 0 10 11"><path d="M0 0 L9.5 5.5 L0 11 Z" fill="#AFB1B3"/></svg>
<svg class="a" style="left:57px;top:608px" width="18" height="17" viewBox="0 0 18 17"><rect x="0" y="3" width="3" height="14" fill="#AFB1B3"/><rect x="5" y="3" width="3" height="14" fill="#5DB758"/><rect x="10" y="0" width="3" height="17" fill="#AFB1B3"/><rect x="15" y="3" width="3" height="14" fill="#3592C4"/></svg>
<div class="t" style="left:81px;top:608.46px;font-size:16px;color:#BBBBBB;font-weight:400;">External Libraries</div>
<div class="a" style="left:92px;top:131px;width:345px;height:856px;background:#3C3F41;border:1px solid #555555"></div>
<div class="t" style="left:123px;top:138.46px;font-size:16px;color:#BBBBBB;font-weight:400;">New</div>
<svg class="a" style="left:416px;top:140px" width="8" height="11" viewBox="0 0 8 11"><path d="M0 0 L7.5 5.5 L0 11 Z" fill="#AFB1B3"/></svg>
<div class="a" style="left:93px;top:160px;width:343px;height:1px;background:#515151;"></div>
<div class="t" style="left:123px;top:169.46px;font-size:16px;color:#BBBBBB;font-weight:400;">Cu<span class="u">t</span></div>
<div class="t" style="right:1497.4px;top:169.46px;font-size:16px;color:#BBBBBB;font-weight:400;letter-spacing:0.4px;">Ctrl+X</div>
<svg class="a" style="left:97px;top:166px" width="22" height="20" viewBox="0 0 22 20"><path d="M4 1 L11.5 12 M18 1 L10.5 12" stroke="#AFB1B3" stroke-width="1.2"/><rect x="9.5" y="10.5" width="3" height="3" fill="none" stroke="#AFB1B3" stroke-width="1"/><circle cx="5.5" cy="15.5" r="3" fill="none" stroke="#B27FCC" stroke-width="2.2"/><circle cx="16.5" cy="15.5" r="3" fill="none" stroke="#B27FCC" stroke-width="2.2"/></svg>
<div class="t" style="left:123px;top:196.46px;font-size:16px;color:#BBBBBB;font-weight:400;"><span class="u">C</span>opy</div>
<div class="t" style="right:1497.4px;top:196.46px;font-size:16px;color:#BBBBBB;font-weight:400;letter-spacing:0.4px;">Ctrl+C</div>
<svg class="a" style="left:97px;top:193px" width="20" height="20" viewBox="0 0 20 20"><path d="M7 0.8 H14 L18.2 5 V15.2 H7 Z" fill="none" stroke="#AFB1B3" stroke-width="1.6"/><path d="M1.8 4.8 H9 L12.2 8 V18.2 H1.8 Z" fill="#3C3F41" stroke="#3592C4" stroke-width="1.6"/></svg>
<div class="t" style="left:123px;top:223.46px;font-size:16px;color:#BBBBBB;font-weight:400;">C<span class="u">o</span>py Path</div>
<div class="t" style="right:1497.4px;top:223.46px;font-size:16px;color:#BBBBBB;font-weight:400;letter-spacing:0.4px;">Ctrl+Shift+C</div>
<div class="t" style="left:123px;top:250.46px;font-size:16px;color:#BBBBBB;font-weight:400;">Cop<span class="u">y</span> Relative Path</div>
<div class="t" style="right:1497.4px;top:250.46px;font-size:16px;color:#BBBBBB;font-weight:400;letter-spacing:0.4px;">Ctrl+Alt+Shift+C</div>
<div class="t" style="left:123px;top:277.46px;font-size:16px;color:#BBBBBB;font-weight:400;"><span class="u">P</span>aste</div>
<div class="t" style="right:1497.4px;top:277.46px;font-size:16px;color:#BBBBBB;font-weight:400;letter-spacing:0.4px;">Ctrl+V</div>
<svg class="a" style="left:97px;top:273px" width="20" height="20" viewBox="0 0 20 20"><rect x="7" y="3" width="12" height="13" fill="#D5A558"/><rect x="10" y="1" width="6" height="3" fill="#8A8D8F"/><path d="M1.8 7.8 H8 L10.2 10 V18.2 H1.8 Z" fill="#3C3F41" stroke="#AFB1B3" stroke-width="1.6"/></svg>
<div class="a" style="left:93px;top:299px;width:343px;height:1px;background:#515151;"></div>
<div class="t" style="left:123px;top:308.46px;font-size:16px;color:#BBBBBB;font-weight:400;">Find <span class="u">U</span>sages</div>
<div class="t" style="right:1497.4px;top:308.46px;font-size:16px;color:#BBBBBB;font-weight:400;letter-spacing:0.4px;">Alt+F7</div>
<div class="t" style="left:123px;top:335.46px;font-size:16px;color:#BBBBBB;font-weight:400;">Find in <span class="u">P</span>ath...</div>
<div class="t" style="right:1497.4px;top:335.46px;font-size:16px;color:#BBBBBB;font-weight:400;letter-spacing:0.4px;">Ctrl+Shift+F</div>
<div class="t" style="left:123px;top:362.46px;font-size:16px;color:#BBBBBB;font-weight:400;">Repl<span class="u">a</span>ce in Path...</div>
<div class="t" style="right:1497.4px;top:362.46px;font-size:16px;color:#BBBBBB;font-weight:400;letter-spacing:0.4px;">Ctrl+Shift+R</div>
<div class="t" style="left:123px;top:389.46px;font-size:16px;color:#BBBBBB;font-weight:400;"><span class="u">I</span>nspect Code...</div>
<div class="a" style="left:93px;top:411px;width:343px;height:1px;background:#515151;"></div>
<div class="t" style="left:123px;top:420.46px;font-size:16px;color:#BBBBBB;font-weight:400;"><span class="u">R</span>efactor</div>
<svg class="a" style="left:416px;top:422px" width="8" height="11" viewBox="0 0 8 11"><path d="M0 0 L7.5 5.5 L0 11 Z" fill="#AFB1B3"/></svg>
<div class="t" style="left:123px;top:447.46px;font-size:16px;color:#BBBBBB;font-weight:400;">Clean Python Compiled Files</div>
<div class="a" style="left:93px;top:469px;width:343px;height:1px;background:#515151;"></div>
<div class="t" style="left:123px;top:478.46px;font-size:16px;color:#BBBBBB;font-weight:400;">Add to F<span class="u">a</span>vorites</div>
<svg class="a" style="left:416px;top:480px" width="8" height="11" viewBox="0 0 8 11"><path d="M0 0 L7.5 5.5 L0 11 Z" fill="#AFB1B3"/></svg>
<div class="t" style="left:123px;top:505.46px;font-size:16px;color:#BBBBBB;font-weight:400;">Show Image Thumbnails</div>
<div class="t" style="right:1497.4px;top:505.46px;font-size:16px;color:#BBBBBB;font-weight:400;letter-spacing:0.4px;">Ctrl+Shift+T</div>
<div class="a" style="left:93px;top:527px;width:343px;height:1px;background:#515151;"></div>
<div class="t" style="left:123px;top:536.46px;font-size:16px;color:#BBBBBB;font-weight:400;">R<span class="u">u</span>n 'Test: '</div>
<div class="t" style="right:1497.4px;top:536.46px;font-size:16px;color:#BBBBBB;font-weight:400;letter-spacing:0.4px;">Ctrl+Shift+F10</div>
<svg class="a" style="left:99px;top:533px" width="16" height="19" viewBox="0 0 16 19"><path d="M1 0.5 L15.5 9.5 L1 18.5 Z" fill="#2FB14F"/></svg>
<div class="t" style="left:123px;top:563.46px;font-size:16px;color:#BBBBBB;font-weight:400;"><span class="u">D</span>ebug 'Test: '</div>
<svg class="a" style="left:97px;top:560px" width="20" height="20" viewBox="0 0 20 20"><g stroke="#AFB1B3" stroke-width="1" fill="none"><path d="M1.5 1 Q3.5 1.5 4 4.5"/><path d="M6.5 0.5 Q7.5 2 7.3 4"/><path d="M12 1 Q10 1.5 10 4.5"/><path d="M1.5 19 Q3.5 18.5 4 15.5"/><path d="M6.5 19.5 Q7.5 18 7.3 16"/><path d="M12 19 Q10 18.5 10 15.5"/><path d="M18.5 4.5 H16.5 Q15 4.5 15 10 Q15 15.5 16.5 15.5 H18.5"/></g><ellipse cx="7.5" cy="10" rx="6.5" ry="6" fill="#3DB34A"/><path d="M1 10 H12" stroke="#2E8C3A" stroke-width="0.8"/><ellipse cx="12.3" cy="10" rx="2" ry="5" fill="#B4B4B4"/></svg>
<div class="t" style="left:123px;top:590.46px;font-size:16px;color:#BBBBBB;font-weight:400;">Run 'Test: ' with Co<span class="u">v</span>erage</div>
<svg class="a" style="left:97px;top:587px" width="21" height="20" viewBox="0 0 21 20"><defs><clipPath id="cvcm"><circle cx="11.5" cy="9.5" r="8.5"/></clipPath></defs><g clip-path="url(#cvcm)" stroke="#808385" stroke-width="1.4"><path d="M-18 0 L2 20" /><path d="M-13 0 L7 20" /><path d="M-8 0 L12 20" /><path d="M-3 0 L17 20" /><path d="M2 0 L22 20" /><path d="M7 0 L27 20" /><path d="M12 0 L32 20" /><path d="M17 0 L37 20" /><path d="M2 0 L-18 20" /><path d="M7 0 L-13 20" /><path d="M12 0 L-8 20" /><path d="M17 0 L-3 20" /><path d="M22 0 L2 20" /><path d="M27 0 L7 20" /><path d="M32 0 L12 20" /><path d="M37 0 L17 20" /></g><path d="M0.5 3 L8.5 9.5 L0.5 16 Z" fill="#3DB34A"/></svg>
<div class="t" style="left:123px;top:617.46px;font-size:16px;color:#BBBBBB;font-weight:400;">Pro<span class="u">f</span>ile 'Test: '</div>
<svg class="a" style="left:97px;top:614px" width="20" height="20" viewBox="0 0 20 20"><circle cx="9.5" cy="9.5" r="9" fill="#E6E6E6"/><circle cx="9.5" cy="9.5" r="7" fill="none" stroke="#9A9A9A" stroke-width="0.8" stroke-dasharray="2 2"/><path d="M5 4 L9.5 9 L6.5 13" stroke="#444" stroke-width="1.1" fill="none"/><path d="M10.5 7 L19 13 L10.5 19 Z" fill="#3DB34A"/></svg>
<div class="t" style="left:123px;top:644.46px;font-size:16px;color:#BBBBBB;font-weight:400;"><span class="u">C</span>oncurrency Diagram for  'Test: '</div>
<svg class="a" style="left:97px;top:640px" width="20" height="20" viewBox="0 0 20 20"><rect x="0" y="1" width="19" height="3" fill="#D9A25B"/><rect x="0" y="5.5" width="15" height="3" fill="#4F9CD2"/><rect x="0" y="10" width="12" height="3" fill="#D9A25B"/><rect x="0" y="14.5" width="10" height="3" fill="#4F9CD2"/><path d="M10 6.5 L19 12.5 L10 19 Z" fill="#46A757"/></svg>
<div class="a" style="left:93px;top:666px;width:343px;height:1px;background:#515151;"></div>
<div class="t" style="left:123px;top:675.46px;font-size:16px;color:#BBBBBB;font-weight:400;">Create 'Test: '...</div>
<svg class="a" style="left:97px;top:672px" width="20" height="20" viewBox="0 0 20 20"><rect x="0" y="0" width="19" height="19" rx="2" fill="#4E8E5A"/><text x="1.5" y="14" font-size="13" font-weight="bold" font-family="Liberation Sans" fill="#E8E8E8">di</text><path d="M13 16 L17 12 V19 Z" fill="#E05A4F"/><path d="M17 12 L20 15.5 L17 19 Z" fill="#2FB14F"/></svg>
<div class="a" style="left:93px;top:697px;width:343px;height:1px;background:#515151;"></div>
<div class="t" style="left:123px;top:706.46px;font-size:16px;color:#BBBBBB;font-weight:400;">Local <span class="u">H</span>istory</div>
<svg class="a" style="left:416px;top:708px" width="8" height="11" viewBox="0 0 8 11"><path d="M0 0 L7.5 5.5 L0 11 Z" fill="#AFB1B3"/></svg>
<div class="t" style="left:123px;top:733.46px;font-size:16px;color:#BBBBBB;font-weight:400;"><span class="u">G</span>it</div>
<svg class="a" style="left:416px;top:735px" width="8" height="11" viewBox="0 0 8 11"><path d="M0 0 L7.5 5.5 L0 11 Z" fill="#AFB1B3"/></svg>
<div class="t" style="left:123px;top:760.46px;font-size:16px;color:#BBBBBB;font-weight:400;">Synchronize 'dbhot'</div>
<svg class="a" style="left:97px;top:757px" width="20" height="20" viewBox="0 0 20 20"><g fill="#58AADC"><path d="M9 1 A9 9 0 0 0 3.5 16.5 L1 19 H9 V11 L6 14 A5.6 5.6 0 0 1 9 4.4 Z"/><path d="M9 1 A9 9 0 0 0 3.5 16.5 L1 19 H9 V11 L6 14 A5.6 5.6 0 0 1 9 4.4 Z" transform="rotate(180 9.5 10)"/></g></svg>
<div class="a" style="left:93px;top:782px;width:343px;height:1px;background:#515151;"></div>
<div class="a" style="left:93px;top:785px;width:343px;height:27px;background:#4B6EAF;"></div>
<div class="t" style="left:123px;top:791.46px;font-size:16px;color:#C6CAD0;font-weight:400;">Show in Explorer</div>
<div class="t" style="left:123px;top:818.46px;font-size:16px;color:#BBBBBB;font-weight:400;">Directory <span class="u">P</span>ath</div>
<div class="t" style="right:1497.4px;top:818.46px;font-size:16px;color:#BBBBBB;font-weight:400;letter-spacing:0.4px;">Ctrl+Alt+F12</div>
<div class="a" style="left:93px;top:840px;width:343px;height:1px;background:#515151;"></div>
<div class="t" style="left:123px;top:849.46px;font-size:16px;color:#BBBBBB;font-weight:400;">Compare With...</div>
<div class="t" style="right:1497.4px;top:849.46px;font-size:16px;color:#BBBBBB;font-weight:400;letter-spacing:0.4px;">Ctrl+D</div>
<svg class="a" style="left:97px;top:847px" width="20" height="20" viewBox="0 0 20 20"><g fill="#1E9FD8"><path d="M8.9 6.2 L13.7 0.8 V4.7 H19.2 V7.7 H13.7 V11.5 Z"/><path d="M11.1 13.6 L6.4 8.9 V12 H0.9 V15 H6.4 V19 Z"/></g></svg>
<div class="a" style="left:93px;top:871px;width:343px;height:1px;background:#515151;"></div>
<div class="t" style="left:123px;top:880.46px;font-size:16px;color:#BBBBBB;font-weight:400;">Mark Directory as</div>
<svg class="a" style="left:416px;top:882px" width="8" height="11" viewBox="0 0 8 11"><path d="M0 0 L7.5 5.5 L0 11 Z" fill="#AFB1B3"/></svg>
<div class="a" style="left:93px;top:902px;width:343px;height:1px;background:#515151;"></div>
<div class="t" style="left:123px;top:911.46px;font-size:16px;color:#BBBBBB;font-weight:400;">Diagrams</div>
<svg class="a" style="left:416px;top:913px" width="8" height="11" viewBox="0 0 8 11"><path d="M0 0 L7.5 5.5 L0 11 Z" fill="#AFB1B3"/></svg>
<svg class="a" style="left:97px;top:907px" width="20" height="20" viewBox="0 0 20 20"><rect x="0" y="0" width="19" height="3" fill="#8A8D8F"/><rect x="0" y="16" width="19" height="3" fill="#8A8D8F"/><path d="M5 15 V6 M2 8 L5 5 L8 8 M14 15 V6 M11 8 L14 5 L17 8" stroke="#3592C4" stroke-width="1.6" fill="none"/></svg>
<div class="t" style="left:123px;top:938.46px;font-size:16px;color:#BBBBBB;font-weight:400;">Open on GitHub</div>
<svg class="a" style="left:97px;top:935px" width="20" height="20" viewBox="0 0 20 20"><circle cx="10" cy="10" r="9.5" fill="#E0E0E0"/><circle cx="10" cy="10" r="8" fill="#3C3F41"/><path d="M4.5 7 L5 3.5 L7.5 5.5 Q10 4.8 12.5 5.5 L15 3.5 L15.5 7 Q16.5 9 15 12 Q13.5 13.5 12 13.8 V17.5 H8 V13.8 Q6.5 13.5 5 12 Q3.5 9 4.5 7 Z" fill="#E0E0E0"/><path d="M7 10 Q10 8.5 13 10" stroke="#3C3F41" stroke-width="1.5" fill="none"/></svg>
<div class="t" style="left:123px;top:965.46px;font-size:16px;color:#BBBBBB;font-weight:400;">Create Gist...</div>
<svg class="a" style="left:97px;top:962px" width="20" height="20" viewBox="0 0 20 20"><circle cx="10" cy="10" r="9.5" fill="#E0E0E0"/><circle cx="10" cy="10" r="8" fill="#3C3F41"/><path d="M4.5 7 L5 3.5 L7.5 5.5 Q10 4.8 12.5 5.5 L15 3.5 L15.5 7 Q16.5 9 15 12 Q13.5 13.5 12 13.8 V17.5 H8 V13.8 Q6.5 13.5 5 12 Q3.5 9 4.5 7 Z" fill="#E0E0E0"/><path d="M7 10 Q10 8.5 13 10" stroke="#3C3F41" stroke-width="1.5" fill="none"/></svg>
<div class="a" style="left:102px;top:775px;width:246px;height:51px;background:transparent;border:solid #FC1E1E;border-width:5px 4px 5px 4px;border-radius:5px"></div>
<div class="a" style="left:1280px;top:93px;width:270px;height:35px;background:#FFFFFF;border:1px solid #4C6FA8"></div>
<svg class="a" style="left:1286px;top:97px" width="27" height="27" viewBox="0 0 27 27"><circle cx="13.5" cy="13.5" r="12.5" fill="#2F7BE0"/><path d="M13.5 5.5 Q19 5.5 19 11 Q19 14 17.5 15.5 Q20.5 17 21 19.5 Q19 19 17.5 19.8 Q15.5 19 13.5 19.8 Q11.5 19 9.5 19.8 Q8 19 6 19.5 Q6.5 17 9.5 15.5 Q8 14 8 11 Q8 5.5 13.5 5.5 Z" fill="#FFFFFF"/></svg>
<svg class="a" style="left:1319px;top:101px" width="20" height="19" viewBox="0 0 20 19"><rect x="1.5" y="4.5" width="16" height="9" fill="none" stroke="#2F7BE0" stroke-width="2.6"/><rect x="8.2" y="0" width="2.6" height="19" fill="#2F7BE0"/></svg>
<svg class="a" style="left:1349px;top:102px" width="19" height="18" viewBox="0 0 19 18"><circle cx="4" cy="4.5" r="2.6" fill="none" stroke="#2F7BE0" stroke-width="1.8"/><path d="M12 9 Q16 9 16 12.5 Q16 16 12 17.5 Q13.5 15 12.5 14.5 Q10 13.5 10.5 11 Q11 9 12 9 Z" fill="#2F7BE0"/></svg>
<svg class="a" style="left:1376px;top:100px" width="21" height="21" viewBox="0 0 21 21"><circle cx="10.5" cy="10.5" r="8.7" fill="none" stroke="#2F7BE0" stroke-width="1.9"/><circle cx="7.3" cy="8.3" r="1.3" fill="#2F7BE0"/><circle cx="13.7" cy="8.3" r="1.3" fill="#2F7BE0"/><path d="M6 12 Q10.5 16.5 15 12" fill="none" stroke="#2F7BE0" stroke-width="1.7"/></svg>
<svg class="a" style="left:1405px;top:101px" width="20" height="20" viewBox="0 0 20 20"><path d="M2 1 L12.5 13.5 M18 1 L7.5 13.5" stroke="#2F7BE0" stroke-width="2.3"/><circle cx="5" cy="16" r="2.7" fill="none" stroke="#2F7BE0" stroke-width="2.2"/><circle cx="15" cy="16" r="2.7" fill="none" stroke="#2F7BE0" stroke-width="2.2"/></svg>
<svg class="a" style="left:1433px;top:102px" width="21" height="17" viewBox="0 0 21 17"><rect x="1" y="1" width="19" height="15" rx="2" fill="none" stroke="#2F7BE0" stroke-width="2"/><g fill="#2F7BE0"><rect x="4" y="4" width="2" height="2"/><rect x="7.5" y="4" width="2" height="2"/><rect x="11" y="4" width="2" height="2"/><rect x="14.5" y="4" width="2" height="2"/><rect x="4" y="7.5" width="2" height="2"/><rect x="7.5" y="7.5" width="2" height="2"/><rect x="11" y="7.5" width="2" height="2"/><rect x="14.5" y="7.5" width="2" height="2"/><rect x="6" y="11" width="9" height="2"/></g></svg>
<svg class="a" style="left:1464px;top:101px" width="17" height="19" viewBox="0 0 17 19"><circle cx="8.5" cy="4.5" r="3.8" fill="#BFD6F6"/><path d="M1 18.5 Q1 10 8.5 10 Q16 10 16 18.5 Z" fill="#BFD6F6"/></svg>
<svg class="a" style="left:1491px;top:101px" width="21" height="19" viewBox="0 0 21 19"><path d="M7 1 Q10.5 3.5 14 1 L20 4.5 L18 9.5 L16 8.5 V18 Q10.5 19 5 18 V8.5 L3 9.5 L1 4.5 Z" fill="#2F7BE0"/></svg>
<svg class="a" style="left:1520px;top:101px" width="21" height="21" viewBox="0 0 21 21"><g transform="translate(10.5,10.5)"><circle r="6.8" fill="#2F7BE0"/><g fill="#2F7BE0"><rect x="-2.3" y="-9.5" width="4.6" height="19" rx="1"/><rect x="-2.3" y="-9.5" width="4.6" height="19" rx="1" transform="rotate(60)"/><rect x="-2.3" y="-9.5" width="4.6" height="19" rx="1" transform="rotate(120)"/></g><circle r="3" fill="#FFFFFF"/></g></svg>
</body></html>
